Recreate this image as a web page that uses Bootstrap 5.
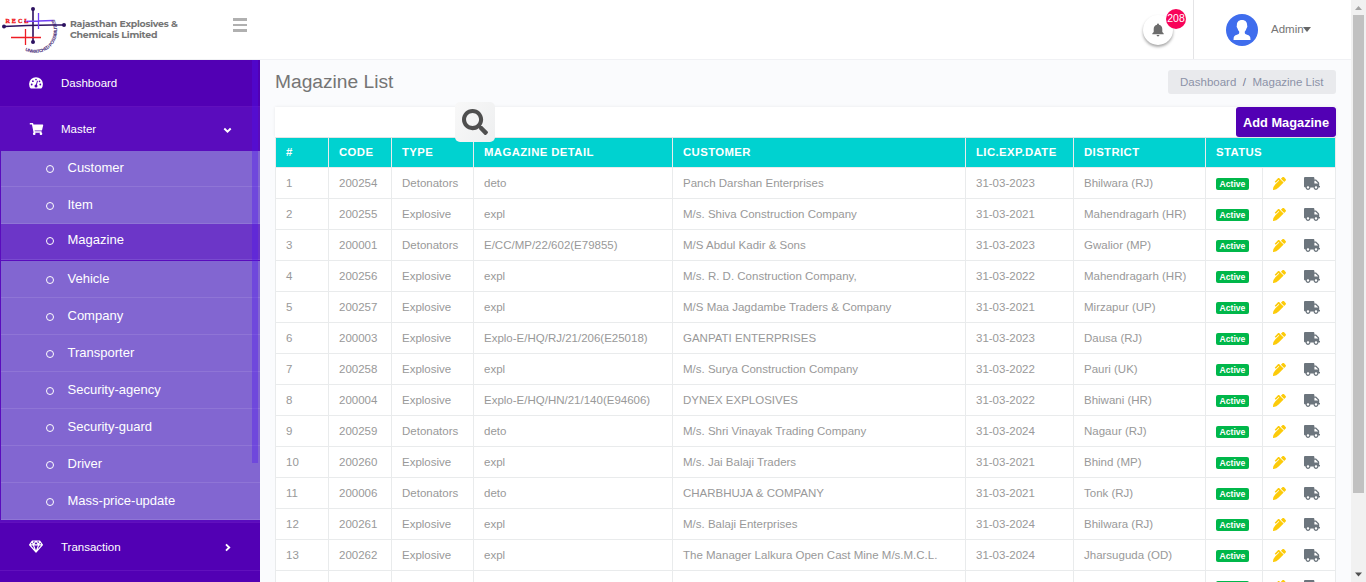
<!DOCTYPE html>
<html lang="en">
<head>
<meta charset="utf-8">
<title>Magazine List</title>
<link href="https://cdn.jsdelivr.net/npm/bootstrap@5.3.0/dist/css/bootstrap.min.css" rel="stylesheet">
<style>
body{font-family:"Liberation Sans",Arial,sans-serif;font-size:11.5px;line-height:1.5;color:#999;background:#fafbfd;height:582px}
svg{display:block;flex:none}
.topbar{height:60px;background:#fff;border-bottom:1px solid #f0f1f4}
.brandname{font:700 9.4px/11px "Montserrat","Open Sans",sans-serif;letter-spacing:-.23px;color:#757575;white-space:nowrap;margin:-1px 0 0 3px;width:108px}
.burger{width:14px;margin-left:55px;margin-bottom:9px;gap:3px}
.burger i{height:2.500px;background:#b0b0b0}
.bell{width:30px;height:30px;background:#fff;box-shadow:0 2px 3px rgba(0,0,0,.35);margin-right:20px}
.bell .count{left:23px;top:-6px;width:20px;height:20px;background:#f80359;color:#fff;font-size:10.5px;padding-top:1px}
.userbox{width:158px;border-left:1px solid #e4e4e6;color:#757575;padding-left:32px}
.caret{border:4px solid transparent;border-top:5px solid #666;border-bottom:0;margin:0 0 1px -1px}
.sidebar{width:260px;background:#5200b4;color:#fff}
.side-link{height:47px;border-bottom:1px solid #6110bd;padding:1px 28px 0}
.side-link .ico{width:16px;margin-right:17px}
.side-link .ico svg{margin-top:-2px}
.side-link.opened{height:44px;background:#5a0cbd;border:0;padding-top:2px}
.side-link.closed{height:49px;border-top:1px solid #6110bd;padding-top:2px}
.submenu-wrap{background:#5a0cbd;padding-bottom:2px}
.submenu{background:#8266d1;margin-left:1px;font-size:13px;line-height:20px}
.submenu li{height:37px;border-bottom:1px solid #8f75d6;padding:0 0 0 45px}
.submenu li:first-child{height:36px;padding-bottom:2px}
.submenu li.current{height:36px;background:#6c36c8;border-color:#7a4bd0;padding-bottom:4px;box-shadow:0 1px #5a0cbd;margin-bottom:1px}
.ring{width:8px;height:8px;border:1px solid #fff;margin:2px 13.5px 0 0}
.sidescroll{left:252px;top:0;width:6px;height:403px;background:rgba(76,17,240,.35)}
.page-title{font-size:19.2px;line-height:24px;color:#757575;font-weight:400}
.crumbs{height:24px;background:#e9eaed;padding:1px 12.500px 0;color:#8c92a8;border-radius:3px}
.crumbs .breadcrumb-item+.breadcrumb-item{padding-left:6.500px}
.crumbs .breadcrumb-item+.breadcrumb-item:before{padding-right:6.500px;color:#757b92}
.tools{height:30px;background:#fff;box-shadow:0 0 3px rgba(0,0,0,.08)}
.findbtn{left:180px;top:-5px;width:40px;height:40px;padding:0 0 0 7px;border-radius:5px;background:linear-gradient(120deg,#f8f8f8,#eeeff0);z-index:2}
.addbtn{width:100px;height:30px;padding:1px 0 0;background:#5200b4;color:#fff;font-size:12.8px;font-weight:700;border-radius:3px}
.addbtn:hover{background:#44009a;color:#fff}
.maglist{width:1061px;table-layout:fixed;border-collapse:collapse;line-height:18px;background:#fff}
.maglist td,.maglist th{border:1px solid #e9ebec;height:31px;padding:0 10px;white-space:nowrap;vertical-align:middle}
.maglist th{height:30px;padding-bottom:2px;background:#00d2d0;color:#fff;font-weight:700;font-size:11.35px;letter-spacing:.4px}
.maglist .st{font-size:8.600px;line-height:12px;background:#00b74a;padding:0;width:33px;border-radius:2px;margin-top:2px}
.acts{gap:18px}
.pagescroll{width:15px;background:#f1f1f1}
.pagescroll .thumb{width:11px;height:478px;background:#c1c1c1}
</style>
</head>
<body class="d-flex overflow-hidden">
<div class="flex-grow-1 d-flex flex-column overflow-hidden">
  <header class="topbar d-flex align-items-center flex-shrink-0">
    <svg width="67" height="58" viewBox="0 0 67 58">
      <g fill="none"><path d="M4 25.500Q33 23.500 64 24" stroke="#2c1160" stroke-width="1.500"/><path d="M33 8V41" stroke="#2c1160" stroke-width="1.600"/><path d="M24 20.500L53 19.500M38.500 12V28" stroke="#7140f5" stroke-width="1.300"/><path d="M11 36.500H41M25.500 28V44" stroke="#ee1c24" stroke-width="1.300"/></g>
      <g fill="#2c1160"><circle cx="33" cy="8" r="2"/><circle cx="4" cy="25.500" r="2"/><circle cx="64" cy="24" r="2"/><circle cx="33" cy="41" r="2"/></g>
      <text x="5.500" y="22.300" font-family="Liberation Serif" font-weight="700" font-size="6.200" letter-spacing="1.900" fill="#f01218" stroke="#f01218" stroke-width=".3">RECL</text>
      <path id="seal" d="M25 49.500C38 56 54 49 56.500 34C58 26 56 19 49.500 13" fill="none"/>
      <text font-size="4.600" font-weight="700" letter-spacing="-.3" fill="#3d2272" font-family="Liberation Sans"><textPath href="#seal">UNMATCHED POSSIBILITIES</textPath></text>
    </svg>
    <div class="brandname">Rajasthan Explosives &amp;<br>Chemicals Limited</div>
    <div class="burger d-flex flex-column"><i></i><i></i><i></i></div>
    <div class="bell rounded-circle position-relative ms-auto d-flex align-items-center justify-content-center">
      <svg width="12" height="14" viewBox="0 0 12 14" fill="#6c6c6c"><path d="M6 .5a1 1 0 0 0-1 1v.3C2.900 2.300 1.700 3.900 1.700 6v3L.3 10.500v.8h11.400v-.8L10.300 9V6C10.300 3.900 9.100 2.300 7 1.800v-.3a1 1 0 0 0-1-1zM4.600 12.100a1.400 1.400 0 0 0 2.800 0z"/></svg>
      <span class="count position-absolute rounded-circle d-flex align-items-center justify-content-center">208</span>
    </div>
    <div class="userbox h-100 d-flex align-items-center">
      <svg class="me-2" width="37" height="32" viewBox="0 0 37 32"><circle cx="16" cy="16" r="16" fill="#3f6ded"/><path fill="#fff" d="M16 6c3.600 0 5.100 2.200 5.100 5 0 .7.400.8.200 1.800-.2.900-.6 1-.8 1.600-.4 1.300-.9 2.200-1.500 2.900-.4.600-.3 2.300.4 2.700 2.200 1.100 4.600 1.300 4.900 3.500l.2 2.500H7.500l.2-2.500c.3-2.200 2.700-2.400 4.900-3.500.7-.4.800-2.100.4-2.700-.6-.7-1.100-1.600-1.500-2.900-.2-.6-.6-.7-.8-1.600-.2-1 .2-1.100.2-1.800 0-2.800 1.500-5 5.100-5z"/></svg>
      <span>Admin</span><span class="caret"></span>
    </div>
  </header>
  <div class="d-flex flex-grow-1 overflow-hidden">
    <nav class="sidebar position-relative flex-shrink-0">
      <a class="side-link d-flex align-items-center text-white text-decoration-none">
        <span class="ico"><svg width="16" height="12" viewBox="0 0 16 12"><path d="M2.700 11.500A6.900 6.900 0 1 1 13.300 11.500z" fill="#fff"/><g fill="#5200b4"><circle cx="3.700" cy="7.500" r=".9"/><circle cx="4.900" cy="4.200" r=".9"/><circle cx="8" cy="2.600" r=".8"/><circle cx="12.300" cy="7.500" r=".9"/><circle cx="11.500" cy="4.400" r=".8"/><circle cx="8" cy="9" r="1.500"/></g><path d="M8 9L9.500 3.800" stroke="#5200b4" stroke-width="1"/></svg></span>Dashboard</a>
      <a class="side-link opened d-flex align-items-center text-white text-decoration-none">
        <span class="ico"><svg width="16" height="12" viewBox="-20 0 576 512" fill="#fff"><path d="M528.120 301.319l47.273-208C578.806 78.301 567.391 64 551.990 64H159.208l-9.166-44.810C147.758 8.021 137.930 0 126.529 0H24C10.745 0 0 10.745 0 24v16c0 13.255 10.745 24 24 24h69.883l70.248 343.435C147.325 417.100 136 435.222 136 456c0 30.928 25.072 56 56 56s56-25.072 56-56c0-15.674-6.447-29.835-16.824-40h209.647C430.447 426.165 424 440.326 424 456c0 30.928 25.072 56 56 56s56-25.072 56-56c0-22.172-12.888-41.332-31.579-50.405l5.517-24.276c3.413-15.018-8.002-29.319-23.403-29.319H218.117l-6.545-32h293.145c11.206 0 20.920-7.754 23.403-18.681z"/></svg></span>Master
        <svg class="ms-auto" width="9" height="7" viewBox="0 0 9 7" fill="none" stroke="#fff" stroke-width="1.900"><path d="M1.300 1.500L4.500 4.700 7.700 1.500"/></svg></a>
      <div class="submenu-wrap">
      <ul class="submenu list-unstyled mb-0">
        <li class="d-flex align-items-center"><i class="ring rounded-circle"></i>Customer</li>
        <li class="d-flex align-items-center"><i class="ring rounded-circle"></i>Item</li>
        <li class="current d-flex align-items-center"><i class="ring rounded-circle"></i>Magazine</li>
        <li class="d-flex align-items-center"><i class="ring rounded-circle"></i>Vehicle</li>
        <li class="d-flex align-items-center"><i class="ring rounded-circle"></i>Company</li>
        <li class="d-flex align-items-center"><i class="ring rounded-circle"></i>Transporter</li>
        <li class="d-flex align-items-center"><i class="ring rounded-circle"></i>Security-agency</li>
        <li class="d-flex align-items-center"><i class="ring rounded-circle"></i>Security-guard</li>
        <li class="d-flex align-items-center"><i class="ring rounded-circle"></i>Driver</li>
        <li class="d-flex align-items-center"><i class="ring rounded-circle"></i>Mass-price-update</li>
      </ul>
      </div>
      <a class="side-link closed d-flex align-items-center text-white text-decoration-none">
        <span class="ico"><svg width="16" height="13" viewBox="0 0 16 13" fill="none" stroke="#fff" stroke-width="1.200" stroke-linejoin="round"><path d="M4.300 1h7.400l2.700 3.900L8 12 1.600 4.900zM1.600 4.900h12.800M4.300 1l1 3.900L8 12l2.700-7.100 1-3.900M5.300 4.900L8 1l2.700 3.900"/></svg></span>Transaction
        <svg class="ms-auto" width="9" height="9" viewBox="0 0 9 9" fill="none" stroke="#fff" stroke-width="1.900"><path d="M3 1.300L6.200 4.500 3 7.700"/></svg></a>
      <div class="sidescroll position-absolute"></div>
    </nav>
    <main class="flex-grow-1 overflow-hidden" style="padding:10px 0 0 15px">
      <div class="d-flex justify-content-between" style="height:37px;margin-right:15px">
        <h1 class="page-title mb-0">Magazine List</h1>
        <ol class="crumbs breadcrumb align-items-center mb-0">
          <li class="breadcrumb-item">Dashboard</li><li class="breadcrumb-item">Magazine List</li>
        </ol>
      </div>
      <div class="tools position-relative d-flex justify-content-end" style="margin-right:15px">
        <button class="findbtn btn border-0 position-absolute" aria-label="Search"><svg width="26" height="26" viewBox="0 0 512 512" fill="#4f4f4f"><path d="M505 442.700L405.300 343c-4.500-4.500-10.600-7-17-7H372c27.600-35.300 44-79.700 44-128C416 93.100 322.900 0 208 0S0 93.100 0 208s93.100 208 208 208c48.300 0 92.700-16.400 128-44v16.300c0 6.400 2.500 12.500 7 17l99.700 99.700c9.400 9.400 24.600 9.400 33.900 0l28.300-28.300c9.400-9.400 9.400-24.600.1-34zM208 336c-70.700 0-128-57.200-128-128 0-70.700 57.200-128 128-128 70.700 0 128 57.200 128 128 0 70.700-57.200 128-128 128z"/></svg></button>
        <button class="addbtn btn border-0">Add Magazine</button>
      </div>
      <table class="maglist">
        <colgroup><col style="width:53px"><col style="width:63px"><col style="width:82px"><col style="width:199px"><col style="width:293px"><col style="width:108px"><col style="width:132px"><col style="width:57px"><col style="width:73px"></colgroup>
        <thead><tr><th>#</th><th>CODE</th><th>TYPE</th><th>MAGAZINE DETAIL</th><th>CUSTOMER</th><th>LIC.EXP.DATE</th><th>DISTRICT</th><th colspan="2">STATUS</th></tr></thead>
        <tbody id="rows"></tbody>
      </table>
    </main>
  </div>
</div>
<div class="pagescroll d-flex flex-column align-items-center justify-content-between flex-shrink-0">
  <div><svg width="11" height="15" viewBox="0 0 11 15"><path d="M2 10h7L5.500 6z" fill="#a3a3a3"/></svg><div class="thumb"></div></div>
  <svg width="11" height="15" viewBox="0 0 11 15"><path d="M2 5.500h7L5.500 9.500z" fill="#505050"/></svg>
</div>
<script src="https://cdn.jsdelivr.net/npm/bootstrap@5.3.0/dist/js/bootstrap.bundle.min.js"></script>
<script>
const magazines = [
 ["200254","Detonators","deto","Panch Darshan Enterprises","31-03-2023","Bhilwara (RJ)"],
 ["200255","Explosive","expl","M/s. Shiva Construction Company","31-03-2021","Mahendragarh (HR)"],
 ["200001","Detonators","E/CC/MP/22/602(E79855)","M/S Abdul Kadir & Sons","31-03-2023","Gwalior (MP)"],
 ["200256","Explosive","expl","M/s. R. D. Construction Company,","31-03-2022","Mahendragarh (HR)"],
 ["200257","Explosive","expl","M/S Maa Jagdambe Traders & Company","31-03-2021","Mirzapur (UP)"],
 ["200003","Explosive","Explo-E/HQ/RJ/21/206(E25018)","GANPATI ENTERPRISES","31-03-2023","Dausa (RJ)"],
 ["200258","Explosive","expl","M/s. Surya Construction Company","31-03-2022","Pauri (UK)"],
 ["200004","Explosive","Explo-E/HQ/HN/21/140(E94606)","DYNEX EXPLOSIVES","31-03-2022","Bhiwani (HR)"],
 ["200259","Detonators","deto","M/s. Shri Vinayak Trading Company","31-03-2024","Nagaur (RJ)"],
 ["200260","Explosive","expl","M/s. Jai Balaji Traders","31-03-2021","Bhind (MP)"],
 ["200006","Detonators","deto","CHARBHUJA & COMPANY","31-03-2021","Tonk (RJ)"],
 ["200261","Explosive","expl","M/s. Balaji Enterprises","31-03-2024","Bhilwara (RJ)"],
 ["200262","Explosive","expl","The Manager Lalkura Open Cast Mine M/s.M.C.L.","31-03-2024","Jharsuguda (OD)"],
 ["","","","","",""]
];
const pen = '<svg width="13" height="13" viewBox="0 0 512 512" fill="#fccb0a"><path d="M497.940 74.170l-60.110-60.110c-18.750-18.750-49.160-18.750-67.910 0l-56.550 56.550 128.020 128.020 56.550-56.550c18.750-18.750 18.750-49.150 0-67.910zm-246.800-20.530c-15.620-15.620-40.940-15.620-56.560 0L75.800 172.430c-6.250 6.250-6.250 16.380 0 22.620l22.630 22.630c6.250 6.250 16.380 6.250 22.630 0l101.820-101.820 22.630 22.620L93.950 290.030A327.038 327.038 0 0 0 .17 485.110l-.03.23c-1.700 15.280 11.210 28.200 26.490 26.510a327.020 327.020 0 0 0 195.340-93.800l196.790-196.790-82.770-82.770-84.850-84.670z"/></svg>';
const truck = '<svg width="16" height="13" viewBox="0 0 640 512" fill="#6c757d"><path d="M624 352h-16V243.900c0-12.700-5.100-24.900-14.100-33.900L494 110.100c-9-9-21.200-14.100-33.900-14.100H416V48c0-26.500-21.500-48-48-48H48C21.500 0 0 21.500 0 48v320c0 26.500 21.500 48 48 48h16c0 53 43 96 96 96s96-43 96-96h128c0 53 43 96 96 96s96-43 96-96h48c8.800 0 16-7.200 16-16v-32c0-8.800-7.200-16-16-16zM160 464c-26.500 0-48-21.500-48-48s21.500-48 48-48 48 21.500 48 48-21.500 48-48 48zm320 0c-26.500 0-48-21.500-48-48s21.500-48 48-48 48 21.500 48 48-21.500 48-48 48zm80-208H416V144h44.100l99.900 99.900V256z"/></svg>';
document.getElementById("rows").innerHTML = magazines.map((m, i) =>
  `<tr><td>${m[0] ? i + 1 : ""}</td>${m.map(v => `<td>${v.replace("&", "&amp;")}</td>`).join("")}<td><span class="st badge d-inline-block">Active</span></td><td><div class="acts d-flex align-items-center">${pen}${truck}</div></td></tr>`).join("");
</script>
</body>
</html>
